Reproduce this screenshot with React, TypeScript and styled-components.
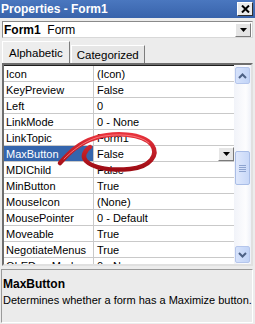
import React from "react";
import styled, { createGlobalStyle } from "styled-components";

const GlobalStyle = createGlobalStyle`
  html, body {
    margin: 0;
    padding: 0;
    background: #ececec;
  }
  body {
    font-family: "Liberation Sans", Arial, sans-serif;
    font-size: 11px;
    color: #000;
  }
`;

const rows: { name: string; value: string }[] = [
  { name: "Icon", value: "(Icon)" },
  { name: "KeyPreview", value: "False" },
  { name: "Left", value: "0" },
  { name: "LinkMode", value: "0 - None" },
  { name: "LinkTopic", value: "Form1" },
  { name: "MaxButton", value: "False" },
  { name: "MDIChild", value: "False" },
  { name: "MinButton", value: "True" },
  { name: "MouseIcon", value: "(None)" },
  { name: "MousePointer", value: "0 - Default" },
  { name: "Moveable", value: "True" },
  { name: "NegotiateMenus", value: "True" },
  { name: "OLEDragMode", value: "0 - None" },
];

const SELECTED = "MaxButton";

export default function App(): React.ReactElement {
  return (
    <Window>
      <GlobalStyle />
      <TitleBar>
        <span>Properties - Form1</span>
        <CloseButton>
          <svg width="9" height="8" viewBox="0 0 9 8">
            <path d="M1 0.5 L8 7.5 M8 0.5 L1 7.5" stroke="#000" strokeWidth="2" />
          </svg>
        </CloseButton>
      </TitleBar>

      <Combo>
        <ComboText>
          <b>Form1</b>&nbsp; Form
        </ComboText>
        <DropButton>
          <DownArrow />
        </DropButton>
      </Combo>

      <Tabs>
        <Tab $active>Alphabetic</Tab>
        <Tab>Categorized</Tab>
      </Tabs>

      <GridBox>
        <RowList>
          {rows.map(({ name, value }) => {
            const selected = name === SELECTED;
            return (
              <Row key={name}>
                <NameCell $selected={selected}>{name}</NameCell>
                <ValueCell>
                  <span>{value}</span>
                  {selected && (
                    <CellDrop>
                      <DownArrow />
                    </CellDrop>
                  )}
                </ValueCell>
              </Row>
            );
          })}
        </RowList>
        <ScrollBar>
          <ScrollButton>
            <Chevron up />
          </ScrollButton>
          <Thumb>
            <Grip />
            <Grip />
            <Grip />
            <Grip />
          </Thumb>
          <ScrollButton $bottom>
            <Chevron />
          </ScrollButton>
        </ScrollBar>
      </GridBox>

      <Description>
        <DescTitle>MaxButton</DescTitle>
        <div>Determines whether a form has a Maximize button.</div>
      </Description>

      <Annotation width="255" height="324" viewBox="0 0 255 324">
        <defs>
          <linearGradient id="red" x1="0" y1="0" x2="0" y2="1">
            <stop offset="0" stopColor="#e8323c" />
            <stop offset="1" stopColor="#9e0c14" />
          </linearGradient>
        </defs>
        <path
          d="M60 163 C68 154 78 143 95 138 C114 132 143 133 152 145 C159 155 150 167 130 169 C110 171 93 168 86 161 C82 157 84 151 90 147"
          fill="none"
          stroke="url(#red)"
          strokeWidth="4.5"
          strokeLinecap="round"
        />
        <path
          d="M64 159 C72 151 83 142 97 137.5 C115 133 139 134 149 143"
          fill="none"
          stroke="#ff8a8a"
          strokeWidth="1"
          strokeLinecap="round"
          opacity="0.8"
        />
      </Annotation>
    </Window>
  );
}

function DownArrow(): React.ReactElement {
  return (
    <svg width="7" height="4" viewBox="0 0 7 4">
      <path d="M0 0 H7 L3.5 4 Z" fill="#000" />
    </svg>
  );
}

function Chevron({ up }: { up?: boolean }): React.ReactElement {
  return (
    <svg width="9" height="6" viewBox="0 0 9 6">
      <path
        d={up ? "M1 5 L4.5 1.5 L8 5" : "M1 1 L4.5 4.5 L8 1"}
        fill="none"
        stroke="#4d6185"
        strokeWidth="2"
      />
    </svg>
  );
}

const Window = styled.div`
  position: relative;
  width: 255px;
  height: 324px;
  overflow: hidden;
  display: flex;
  flex-direction: column;
  background: #ececec;
`;

const TitleBar = styled.div`
  height: 18px;
  flex: none;
  display: flex;
  align-items: center;
  justify-content: space-between;
  padding: 0 2px 0 1px;
  background: linear-gradient(#4a77bf, #3863ab);
  color: #fff;
  font-weight: bold;
  font-size: 12px;
`;

const CloseButton = styled.div`
  width: 14px;
  height: 12px;
  display: flex;
  align-items: center;
  justify-content: center;
  background: #ebebeb;
  border: 1px solid;
  border-color: #fff #303030 #303030 #fff;
`;

const Combo = styled.div`
  margin: 3px 2px 0 2px;
  height: 15px;
  display: flex;
  align-items: center;
  justify-content: space-between;
  background: #fff;
  border: 1px solid #8a8a8a;
  border-right-color: #d8d8d8;
  border-bottom-color: #d8d8d8;
  font-size: 12px;
`;

const ComboText = styled.div`
  padding-left: 1px;
`;

const DropButton = styled.div`
  width: 14px;
  height: 12px;
  margin-right: 1px;
  display: flex;
  align-items: center;
  justify-content: center;
  background: #e4e4e4;
  border: 1px solid;
  border-color: #fff #7a7a7a #7a7a7a #fff;
`;

const Tabs = styled.div`
  margin-top: 3px;
  padding-left: 2px;
  display: flex;
  align-items: flex-end;
  height: 22px;
`;

const Tab = styled.div<{ $active?: boolean }>`
  height: ${(p) => (p.$active ? 21 : 17)}px;
  padding: 0 ${(p) => (p.$active ? 6 : 5)}px;
  display: flex;
  align-items: center;
  font-size: 11.5px;
  background: ${(p) => (p.$active ? "#ededed" : "#e6e6e6")};
  border-top: 1px solid #fff;
  border-left: 1px solid #fff;
  border-right: 1px solid #7c7c7c;
  margin-right: ${(p) => (p.$active ? 1 : 0)}px;
`;

const GridBox = styled.div`
  margin: 0 2px;
  height: 199px;
  flex: none;
  display: flex;
  background: #fff;
  border: 2px solid;
  border-color: #6e6e6e #e0e0e0 #e0e0e0 #6e6e6e;
  box-shadow: inset 1px 1px 0 #1e1e1e;
  overflow: hidden;
`;

const RowList = styled.div`
  flex: 1;
  padding-top: 1px;
  overflow: hidden;
`;

const Row = styled.div`
  display: flex;
  height: 15px;
  border-bottom: 1px solid #c9c9c9;
`;

const NameCell = styled.div<{ $selected?: boolean }>`
  width: 87px;
  padding-left: 2px;
  display: flex;
  align-items: center;
  border-right: 1px solid #c9c9c9;
  background: ${(p) => (p.$selected ? "#3465ad" : "#fff")};
  color: ${(p) => (p.$selected ? "#fff" : "#000")};
  white-space: nowrap;
  overflow: hidden;
`;

const ValueCell = styled.div`
  flex: 1;
  padding-left: 3px;
  display: flex;
  align-items: center;
  justify-content: space-between;
  white-space: nowrap;
`;

const CellDrop = styled.div`
  width: 14px;
  height: 12px;
  display: flex;
  align-items: center;
  justify-content: center;
  background: #e6e6e6;
  border: 1px solid;
  border-color: #fff #7a7a7a #7a7a7a #fff;
`;

const ScrollBar = styled.div`
  width: 17px;
  flex: none;
  display: flex;
  flex-direction: column;
  background: linear-gradient(to right, #f1f3f9, #fdfdfe 70%, #eef1f8);
`;

const ScrollButton = styled.div<{ $bottom?: boolean }>`
  height: 15px;
  margin: ${(p) => (p.$bottom ? "auto 1px 1px 1px" : "2px 1px 0 1px")};
  display: flex;
  align-items: center;
  justify-content: center;
  border-radius: 2px;
  border: 1px solid #b5c6ec;
  background: linear-gradient(to right, #d6e2fb, #c2d4f7);
`;

const Thumb = styled.div`
  height: 32px;
  margin: 67px 1px 0 1px;
  display: flex;
  flex-direction: column;
  align-items: center;
  justify-content: center;
  gap: 1px;
  border-radius: 2px;
  border: 1px solid #a9bde6;
  background: linear-gradient(to right, #dfe8fc, #c8d8f8);
`;

const Grip = styled.div`
  width: 7px;
  height: 1px;
  background: #8ea4cf;
`;

const Description = styled.div`
  margin: 3px 2px 1px 1px;
  flex: 1;
  padding: 6px 1px 0 1px;
  background: #ebebeb;
  border: 1px solid;
  border-color: #9a9a9a #fff #fff #9a9a9a;
  font-size: 11px;
  line-height: 16px;
  white-space: nowrap;
`;

const DescTitle = styled.div`
  font-weight: bold;
  font-size: 12px;
`;

const Annotation = styled.svg`
  position: absolute;
  left: 0;
  top: 0;
  pointer-events: none;
`;
